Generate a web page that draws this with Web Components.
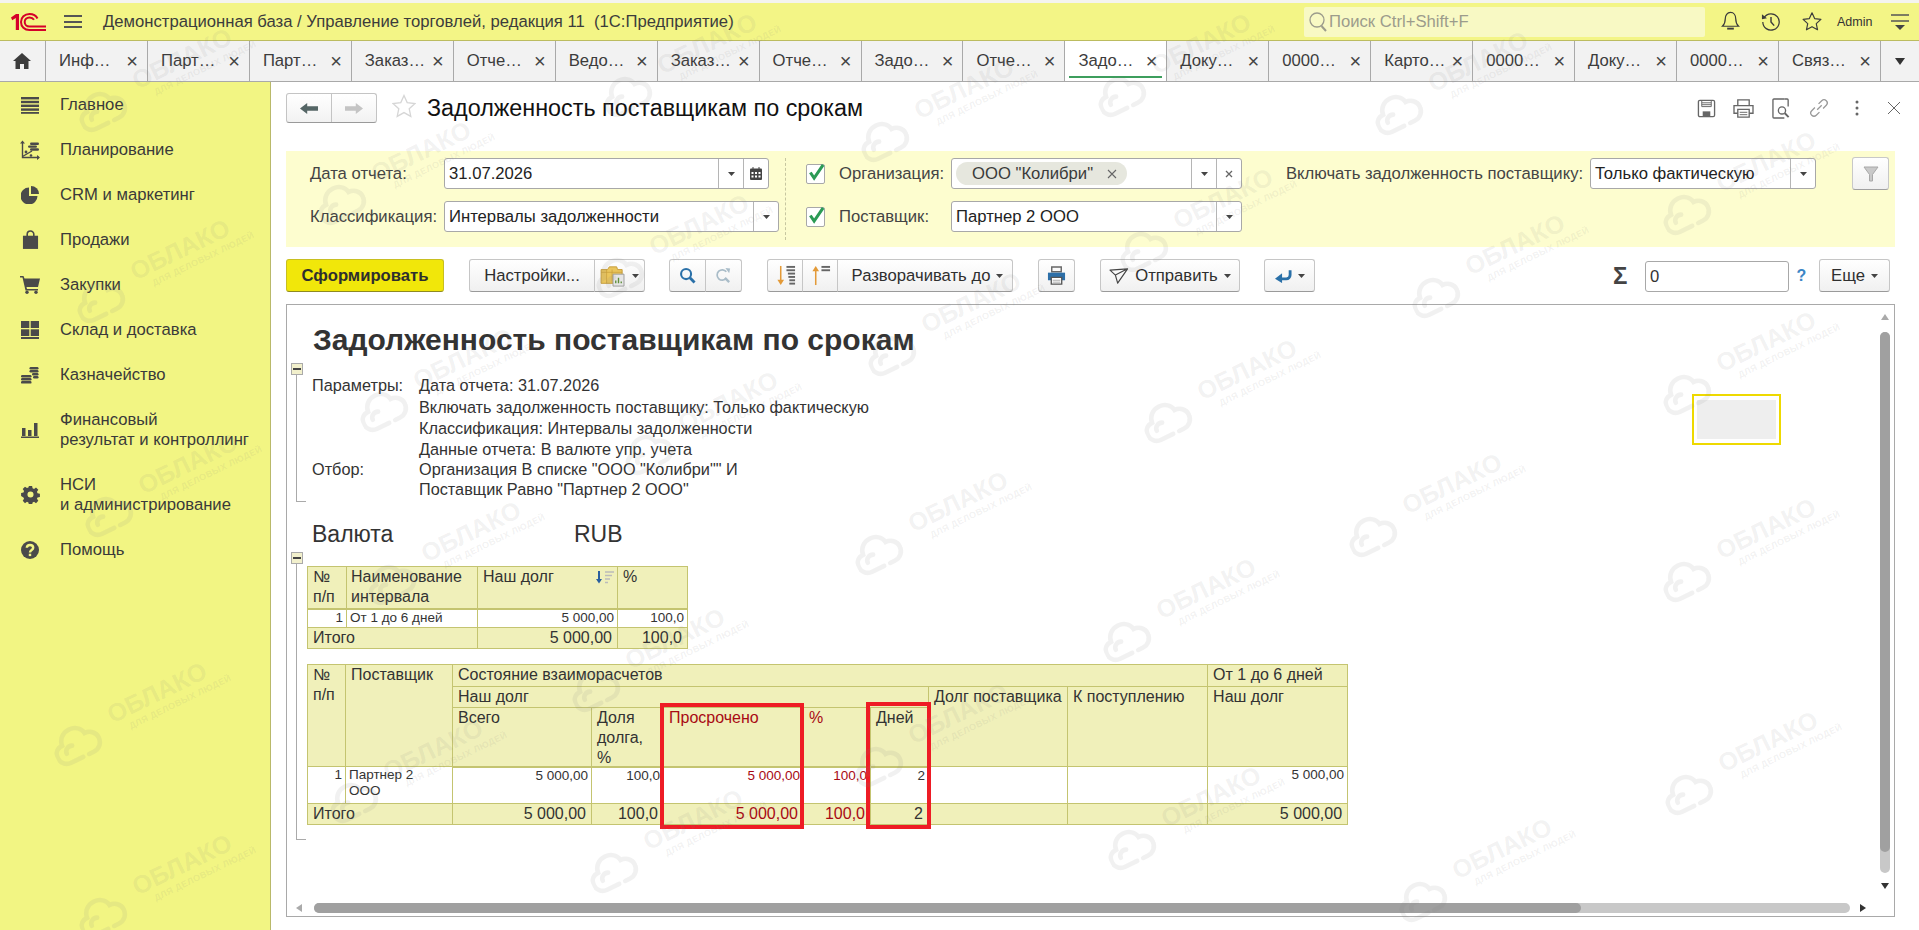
<!doctype html>
<html lang="ru">
<head>
<meta charset="utf-8">
<title>Задолженность поставщикам по срокам</title>
<style>
  html, body { margin: 0; height: 100%; overflow: hidden; background: #fff; }
  body { font-family: "Liberation Sans", Arial, sans-serif; }
</style>
</head>
<body>
<ob-app>
  <ob-header slot="header">Демонстрационная база / Управление торговлей, редакция 11&nbsp; (1С:Предприятие)</ob-header>
  <ob-tabs slot="tabs" labels="Инф…,Парт…,Парт…,Заказ…,Отче…,Ведо…,Заказ…,Отче…,Задо…,Отче…,Задо…,Доку…,0000…,Карто…,0000…,Доку…,0000…,Связ…" active="10"></ob-tabs>
  <ob-sidebar slot="side">
    <ob-nav icon="main">Главное</ob-nav>
    <ob-nav icon="plan">Планирование</ob-nav>
    <ob-nav icon="crm">CRM и маркетинг</ob-nav>
    <ob-nav icon="bag">Продажи</ob-nav>
    <ob-nav icon="cart">Закупки</ob-nav>
    <ob-nav icon="stock">Склад и доставка</ob-nav>
    <ob-nav icon="coins">Казначейство</ob-nav>
    <ob-nav icon="bars" two>Финансовый<br>результат и контроллинг</ob-nav>
    <ob-nav icon="gear" two>НСИ<br>и администрирование</ob-nav>
    <ob-nav icon="help">Помощь</ob-nav>
  </ob-sidebar>
  <ob-form-head slot="main">Задолженность поставщикам по срокам</ob-form-head>
  <ob-filters slot="main"></ob-filters>
  <ob-commandbar slot="main"></ob-commandbar>
  <ob-report slot="main"></ob-report>
  <ob-watermarks slot="over"></ob-watermarks>
</ob-app>

<script>
const I = (vb, body, w, h) => `<svg xmlns="http://www.w3.org/2000/svg" viewBox="${vb}" width="${w}" height="${h || w}">${body}</svg>`;

const navIcons = {
  main: I('0 0 18 18', '<g fill="#4a4a4a"><rect y="1" width="18" height="2.4"/><rect y="4.8" width="18" height="2.4"/><rect y="8.6" width="18" height="2.4"/><rect y="12.4" width="18" height="2.4"/><rect y="16" width="18" height="1.8"/></g>', 18),
  plan: I('0 0 20 20', '<g fill="none" stroke="#4a4a4a" stroke-width="1.4"><path d="M2.5 2v15.5H19"/><path d="M2.5 16.5 12 11"/></g><g fill="#4a4a4a"><path d="M0 3.5 2.5.5 5 3.5zM17 15l3 2.5-3 2.5z"/><rect x="10" y="2.5" width="9" height="2.4" rx="1.2"/><rect x="8" y="5.4" width="9" height="2.4" rx="1.2"/><rect x="10" y="8.3" width="9" height="2.4" rx="1.2"/><circle cx="6" cy="12" r="1.4"/><circle cx="11" cy="15.5" r="1.3"/></g>', 20),
  crm: I('0 0 18 18', '<path fill="#4a4a4a" d="M8 1.5V10h8.500A8.500 8.500 0 1 1 8 1.5z"/><path fill="#4a4a4a" d="M10 0a8 8 0 0 1 8 8h-8z"/>', 18),
  bag: I('0 0 18 20', '<path fill="#4a4a4a" d="M1 6h16v14H1z"/><path fill="none" stroke="#4a4a4a" stroke-width="1.7" d="M5.5 9V4.5a3.5 3.5 0 0 1 7 0V9"/>', 17, 19),
  cart: I('0 0 20 18', '<path fill="#4a4a4a" d="M0 0h3.5l1 2.5H20l-2 8.5H6.5l.5 2h11v1.500H5.500L2.500 1.500H0z"/><circle cx="7" cy="16.3" r="1.7" fill="#4a4a4a"/><circle cx="16" cy="16.3" r="1.7" fill="#4a4a4a"/>', 20, 18),
  stock: I('0 0 18 18', '<g fill="#4a4a4a"><rect x="0" y="0" width="8.3" height="7"/><rect x="9.7" y="0" width="8.3" height="7"/><rect x="0" y="8.3" width="8.3" height="6.7"/><rect x="9.7" y="8.3" width="8.3" height="6.7"/><rect x="0" y="16" width="18" height="2"/></g>', 18),
  coins: I('0 0 18 18', '<g fill="#4a4a4a"><rect x="0" y="9" width="10.5" height="2.4" rx="1.2"/><rect x="0" y="12" width="10.5" height="2.4" rx="1.2"/><rect x="0" y="15" width="10.5" height="2.6" rx="1.2"/><rect x="8.5" y="1" width="9" height="2.4" rx="1.2"/><rect x="8.5" y="4" width="9" height="2.4" rx="1.2"/><rect x="11" y="7" width="6.5" height="2.4" rx="1.2"/><rect x="12" y="10" width="5.5" height="2.4" rx="1.2"/></g>', 18),
  bars: I('0 0 18 16', '<g fill="#4a4a4a"><rect x="1" y="6" width="3.5" height="8"/><rect x="7" y="8" width="3.5" height="6"/><rect x="13" y="1" width="3.5" height="13"/><rect y="14.5" width="18" height="1.5"/></g>', 18, 16),
  gear: I('-1 -1 20 20', '<path fill="#4a4a4a" fill-rule="evenodd" d="M7.3 0h3.400l.5 2.500 1.500.6 2.100-1.400 2.400 2.400-1.400 2.100.6 1.500 2.500.5v3.400l-2.500.5-.6 1.500 1.400 2.100-2.400 2.400-2.100-1.400-1.500.6-.5 2.500H7.3l-.5-2.500-1.500-.6-2.100 1.400-2.400-2.400 1.400-2.100-.6-1.500L-.9 10.700V7.300l2.500-.5.6-1.500L.8 3.200l2.400-2.400 2.100 1.400 1.500-.6zM9 5.800a3.200 3.200 0 1 0 0 6.400 3.200 3.200 0 0 0 0-6.400z"/>', 19),
  help: I('0 0 18 18', '<circle cx="9" cy="9" r="9" fill="#4a4a4a"/><path fill="none" stroke="#f2f583" stroke-width="2.4" d="M5.8 6.8C5.900 5 7.200 4 9 4s3.200 1 3.200 2.700C12.200 9 9 9 9 11.500"/><rect x="7.8" y="12.7" width="2.4" height="2.4" fill="#f2f583"/>', 18)
};

const tool = {
  blueSearch: I('0 0 18 18', '<circle cx="7.5" cy="7.5" r="5.3" fill="none" stroke="#2a70a8" stroke-width="2.2"/><path d="M11.5 11.5 16.5 16.5" stroke="#2a70a8" stroke-width="3"/>', 17),
  graySearch: I('0 0 18 18', '<path d="M13 4a5.5 5.5 0 1 0 0 7" transform="translate(-1 1)" fill="none" stroke="#a9bcc8" stroke-width="1.8"/><path d="M10.5 11.5 15 16" stroke="#a9bcc8" stroke-width="2.5"/><path d="M11 1l5 .5-1 5z" fill="#a9bcc8"/>', 17),
  sortDown: I('0 0 22 22', '<path d="M6 1v17" stroke="#e39a38" stroke-width="1.6"/><path d="M2.5 15.5 6 21l3.5-5.5z" fill="#e39a38"/><g fill="#666"><rect x="12" y="1" width="9" height="2"/><rect x="12" y="4.5" width="9" height="2"/><rect x="13.5" y="8" width="7.5" height="2"/><rect x="14" y="11.5" width="7" height="2"/><rect x="15" y="15" width="6" height="2"/><rect x="15" y="18.5" width="6" height="2"/></g>', 21),
  sortUp: I('0 0 22 22', '<path d="M6 4v17" stroke="#e39a38" stroke-width="1.6"/><path d="M2.5 6.5 6 1l3.5 5.5z" fill="#e39a38"/><g fill="#666"><rect x="12" y="1" width="9" height="2"/><rect x="12" y="4.5" width="9" height="2"/></g>', 21),
  printBlue: I('0 0 20 20', '<path d="M5 1h10v5H5z" fill="none" stroke="#666" stroke-width="1.5"/><path d="M1 7h18v8H1z" fill="#2c6fa8"/><path d="M4.5 12h11v7h-11z" fill="#fff" stroke="#555" stroke-width="1.4"/><path d="M6 15h8M6 17h8" stroke="#aaa"/>', 19),
  send: I('0 0 22 20', '<path d="M1 3.5 20.5 2 9.5 18 7 9z M7 9 20.5 2" fill="none" stroke="#444" stroke-width="1.3" stroke-linejoin="round"/>', 20, 18),
  back: I('0 0 18 14', '<path d="M16 1v5a4 4 0 0 1-4 4H5" fill="none" stroke="#2a70a8" stroke-width="3"/><path d="M7.5 4 0 10l7.500 4.500z" fill="#2a70a8"/>', 17, 14),
  folder: I('0 0 28 24', '<path d="M1 5h7l2-3h8l1 3h5v15H1z" fill="#eac55c" stroke="#c49a38"/><path d="M1 8h23M7 5v15M13 5v15" stroke="#c49a38" stroke-width=".7"/><path d="M14 10h12v13H14z" fill="#e6e6e6" stroke="#999"/><path d="M17 20v-3M20 20v-6M23 20v-2" stroke="#5f8f3c" stroke-width="1.5"/>', 26, 22)
};

const caret = '<svg width="7" height="4" viewBox="0 0 7 4"><path d="M0 0h7L3.5 4z" fill="#444"/></svg>';

class Base extends HTMLElement {
  constructor() {
    super();
    this.attachShadow({ mode: 'open' });
  }
  paint(css, html) {
    this.shadowRoot.innerHTML = `<style>${css}</style>${html}`;
  }
}

class ObApp extends Base {
  connectedCallback() {
    this.paint(`
      :host { display: grid; grid-template-rows: 3px 38px 41px 1fr; grid-template-columns: 271px 1fr; height: 930px; position: relative; overflow: hidden; color: #333; font-size: 16.67px; }
      .top { grid-column: 1 / 3; background: #f4f4ee; }
      .hd { grid-column: 1 / 3; }
      .tb { grid-column: 1 / 3; }
      .mn { display: flex; flex-direction: column; padding: 0 24px 0 15px; min-width: 0; }
    `, `
      <div class="top"></div>
      <div class="hd"><slot name="header"></slot></div>
      <div class="tb"><slot name="tabs"></slot></div>
      <div><slot name="side"></slot></div>
      <div class="mn"><slot name="main"></slot></div>
      <slot name="over"></slot>
    `);
  }
}

class ObHeader extends Base {
  connectedCallback() {
    this.paint(`
      :host { display: flex; align-items: center; height: 38px; box-sizing: border-box; background: #f3f586; border-bottom: 1px solid #bcbc60; padding: 0 10px 0 11px; }
      .burger { margin-left: 18px; width: 18px; display: grid; gap: 3.5px; }
      .burger i { height: 2px; background: #555; display: block; }
      .ttl { margin-left: 21px; font-size: 16.67px; color: #3c3c3c; white-space: nowrap; flex: 1; }
      .search { width: 401px; height: 30px; box-sizing: border-box; background: #f8f9c4; border-radius: 2px; display: flex; align-items: center; padding-left: 5px; color: #9c9c8c; font-size: 16.67px; gap: 2px; }
      .ic { display: flex; align-items: center; justify-content: center; }
      .user { font-size: 12.5px; color: #333; margin-left: 15px; width: 44px; }
    `, `
      ${I('0 0 35 18', '<path d="M0 4.5 5 1h3v16H4.800V5L1.200 7.300z" fill="#d5002a"/><g fill="none" stroke="#d5002a" stroke-width="2"><path d="M26.5 5.5C25 2.5 22 1 18.5 1 13.5 1 10 4.500 10 9s3.500 8 8.500 8H35"/><path d="M23 6.8C22 5.300 20.300 4.500 18.500 4.500 15.700 4.500 13.700 6.500 13.700 9s2 4.500 4.800 4.500H35"/></g>', 35, 18)}
      <div class="burger"><i></i><i></i><i></i></div>
      <div class="ttl"><slot></slot></div>
      <div class="search">
        ${I('0 0 18 20', '<circle cx="8" cy="8" r="7" fill="none" stroke="#9c9c8c" stroke-width="1.3"/><path d="M12.5 14 17 19" stroke="#9c9c8c" stroke-width="2"/>', 18, 20)}
        <span>Поиск Ctrl+Shift+F</span>
      </div>
      <div class="ic" style="margin-left:15px;width:20px">${I('0 0 20 22', '<path d="M10 1.5c-3.500 0-5.500 3-5.500 6.500 0 3.500-1 6-3 8h17c-2-2-3-4.500-3-8 0-3.500-2-6.500-5.500-6.500z" fill="none" stroke="#3c3c3c" stroke-width="1.3"/><path d="M6.5 18.5h7" stroke="#3c3c3c" stroke-width="2"/>', 19, 21)}</div>
      <div class="ic" style="margin-left:21px;width:20px">${I('0 0 22 22', '<path d="M3.5 6A9 9 0 1 1 2 11" fill="none" stroke="#3c3c3c" stroke-width="1.4"/><path d="M1 2.5 6.500 7 1 8z" fill="#3c3c3c"/><path d="M11 5.5V11l3.500 4" fill="none" stroke="#3c3c3c" stroke-width="1.6"/>', 20)}</div>
      <div class="ic" style="margin-left:21px;width:20px">${I('0 0 22 22', '<path d="m11 1.5 2.900 6.300 6.900.8-5.100 4.700 1.400 6.800L11 16.700l-6.100 3.400 1.400-6.800L1.200 8.600l6.900-.8z" fill="none" stroke="#3c3c3c" stroke-width="1.3" stroke-linejoin="round"/>', 21)}</div>
      <div class="user">Admin</div>
      <div class="ic" style="width:18px;margin-left:10px">${I('0 0 18 18', '<path d="M0 2h18M0 8h18" stroke="#555" stroke-width="1.5"/><path d="M4 12h10l-5 5z" fill="#444"/>', 18)}</div>
    `);
  }
}

class ObTabs extends Base {
  connectedCallback() {
    const labels = this.getAttribute('labels').split(',');
    const active = +this.getAttribute('active');
    const tabs = labels.map((t, i) => `<div class="tab ${i === active ? 'on' : ''}"><span>${t}</span><b>×</b></div>`).join('');
    this.paint(`
      :host { display: flex; height: 41px; box-sizing: border-box; background: #f2f2f2; border-bottom: 1px solid #a9a9a9; }
      .home { flex: none; display: flex; align-items: center; justify-content: center; border-right: 1px solid #a9a9a9; padding-right: 1px; box-sizing: border-box; width: 46px; }
      .tab { width: 101.94px; flex: none; box-sizing: border-box; border-right: 1px solid #a9a9a9; padding: 0 9px 0 13px; display: flex; align-items: center; justify-content: space-between; color: #3c3c3c; font-size: 16.67px; position: relative; }
      .tab b { font-weight: 400; font-size: 20px; color: #444; line-height: 1; }
      .on { background: #fff; }
      .on::after { content: ""; position: absolute; left: 4px; right: 4px; bottom: 3px; height: 2px; background: #3d9e5d; }
      .more { flex: 1; display: flex; align-items: center; justify-content: center; }
    `, `
      <div class="home">${I('0 0 18 16', '<path d="M9 0 0 8h2.500v8H7v-5h4v5h4.500V8H18z" fill="#3c3c3c"/>', 18, 16)}</div>
      ${tabs}
      <div class="more"><svg width="10" height="7" viewBox="0 0 10 7"><path d="M0 0h10L5 7z" fill="#333"/></svg></div>
    `);
  }
}

class ObSidebar extends Base {
  connectedCallback() {
    this.paint(`
      :host { display: block; height: 100%; background: #f2f583; border-right: 1px solid #b9b96a; box-sizing: border-box; }
    `, `<slot></slot>`);
  }
}

class ObNav extends Base {
  connectedCallback() {
    this.paint(`
      :host { display: flex; align-items: center; height: 45px; color: #3a3a3a; font-size: 16.67px; line-height: 20px; }
      :host([two]) { height: 65px; }
      .i { width: 60px; flex: none; display: flex; justify-content: center; box-sizing: border-box; }
    `, `<div class="i">${navIcons[this.getAttribute('icon')]}</div><div><slot></slot></div>`);
  }
}

class ObFormHead extends Base {
  connectedCallback() {
    this.paint(`
      :host { display: flex; align-items: center; height: 30px; margin: 11px -18px 0 0; flex: none; }
      .nav { display: flex; width: 91px; height: 30px; box-sizing: border-box; border: 1px solid #c4c4c4; border-bottom-color: #9a9a9a; border-radius: 3px; background: linear-gradient(#fff, #f2f2f2); }
      .nav div { flex: 1; display: flex; align-items: center; justify-content: center; }
      .nav div + div { border-left: 1px solid #c4c4c4; }
      .star { margin-left: 15px; }
      .t { margin-left: 11px; font-size: 23.33px; color: #111; flex: 1; white-space: nowrap; }
      .ic { display: flex; justify-content: center; width: 37.6px; }
    `, `
      <div class="nav">
        <div>${I('0 0 20 14', '<path d="M0 7 8 1v3.500h12v5H8V13z" fill="#566"/>', 18, 13)}</div>
        <div>${I('0 0 20 14', '<path d="M20 7 12 1v3.500H0v5h12V13z" fill="#c4c4c4"/>', 18, 13)}</div>
      </div>
      <div class="star">${I('0 0 24 24', '<path d="m12 1.500 3.200 7.100 7.800.9-5.800 5.200 1.600 7.700L12 18.600l-6.800 3.800 1.600-7.700L1 9.500l7.800-.9z" fill="#fff" stroke="#d6d6d6" stroke-width="1.3"/>', 24)}</div>
      <div class="t"><slot></slot></div>
      <div class="ic">${I('0 0 20 20', '<path d="M1.500 3A1.500 1.500 0 0 1 3 1.500h14A1.500 1.500 0 0 1 18.500 3v14a1.500 1.500 0 0 1-1.500 1.500H3A1.500 1.500 0 0 1 1.500 17z" fill="none" stroke="#666" stroke-width="1.4"/><path d="M5 2v6h10V2M5 4h10M5 6h10" fill="none" stroke="#666"/><path d="M6 13h8v5H6z" fill="#666"/>', 19)}</div>
      <div class="ic">${I('0 0 22 20', '<path d="M5 7V1h12v6M5 15H1V7h20v8h-4" fill="none" stroke="#666" stroke-width="1.4"/><path d="M5 11h12v8H5z" fill="none" stroke="#666" stroke-width="1.4"/><path d="M7 14h8M7 16.500h8" stroke="#666"/>', 21, 19)}</div>
      <div class="ic">${I('0 0 20 22', '<path d="M13 1H2a1 1 0 0 0-1 1v18a1 1 0 0 0 1 1h11" fill="none" stroke="#666" stroke-width="1.4"/><path d="M13 1h3a1 1 0 0 1 1 1v7" fill="none" stroke="#666" stroke-width="1.4"/><circle cx="10.5" cy="13" r="3.8" fill="none" stroke="#666" stroke-width="1.4"/><path d="m13.500 16 4 4" stroke="#666" stroke-width="2"/>', 19, 21)}</div>
      <div class="ic">${I('0 0 22 22', '<path d="m9 13 5-5M6.500 10.500 3 14a3.500 3.500 0 0 0 5 5l3.500-3.500M10.500 6.500 14 3a3.500 3.500 0 0 1 5 5l-3.500 3.500" fill="none" stroke="#999" stroke-width="1.4"/>', 20)}</div>
      <div class="ic">${I('0 0 4 16', '<circle cx="2" cy="2" r="1.5" fill="#666"/><circle cx="2" cy="8" r="1.5" fill="#666"/><circle cx="2" cy="14" r="1.5" fill="#666"/>', 4, 16)}</div>
      <div class="ic">${I('0 0 14 14', '<path d="m1 1 12 12M13 1 1 13" stroke="#666" stroke-width="1"/>', 14)}</div>
    `);
  }
}

class ObField extends Base {
  connectedCallback() {
    const w = this.getAttribute('w');
    const btns = (this.getAttribute('btns') || '').split(',').filter(Boolean);
    const btn = {
      drop: `<div class="b" style="width:25px">${caret}</div>`,
      cal: `<div class="b" style="width:25px">${I('0 0 12 13', '<rect y="1.5" width="12" height="11.5" rx="1" fill="#444"/><path d="M3 0v2M9 0v2" stroke="#444"/><path d="M1.5 5h2v2h-2zM5 5h2v2H5zM8.500 5h2v2h-2zM1.500 8.500h2v2h-2zM5 8.500h2v2H5zM8.500 8.500h2v2h-2z" fill="#fff"/>', 12, 13)}</div>`,
      clear: `<div class="b" style="width:25px">${I('0 0 8 8', '<path d="m1 1 6 6M7 1 1 7" stroke="#666" stroke-width="1.3"/>', 8)}</div>`
    };
    this.paint(`
      :host { display: flex; width: ${w}px; height: 31px; box-sizing: border-box; background: #fff; border: 1px solid #a8a8a8; border-radius: 3px; font-size: 16.67px; color: #222; flex: none; }
      .v { flex: 1; display: flex; align-items: center; padding-left: 4px; white-space: nowrap; overflow: hidden; min-width: 0; }
      .b { display: flex; align-items: center; justify-content: center; border-left: 1px solid #b5b5b5; flex: none; box-sizing: border-box; }
    `, `<div class="v"><slot></slot></div>${btns.map(b => btn[b]).join('')}`);
  }
}

class ObCheck extends Base {
  connectedCallback() {
    this.paint(`
      :host { display: block; width: 19px; height: 20px; box-sizing: border-box; border: 1px solid #a8a8a8; border-radius: 2px; background: #fff; position: relative; flex: none; }
      svg { position: absolute; left: 1px; top: -2px; }
    `, I('0 0 18 18', '<path d="M2.500 9.500 6.500 15.500 16 1.500" fill="none" stroke="#2b9a55" stroke-width="3.2"/>', 17, 18));
  }
}

class ObFilters extends Base {
  connectedCallback() {
    this.paint(`
      :host { display: flex; align-items: flex-start; height: 96px; margin-top: 28px; flex: none; box-sizing: border-box; background: #fdfdcf; padding: 7px 0 0 24px; font-size: 16.67px; color: #444; }
      .col { display: grid; grid-template-rows: 31px 31px; row-gap: 12px; align-items: center; }
      .c1 { grid-template-columns: 134px auto; }
      .div { margin: 0 20px 0 6px; width: 0; height: 82px; border-left: 1px dashed #c7c7a0; }
      .c2 { grid-template-columns: 33px 112px auto; }
      .inc { margin-left: 44px; width: 304px; height: 31px; display: flex; align-items: center; white-space: nowrap; }
      .fbtn { margin: -1px 0 0 36px; width: 37px; height: 33px; box-sizing: border-box; border: 1px solid #c8c8c8; border-bottom-color: #a0a0a0; border-radius: 3px; background: linear-gradient(#fff, #f0f0f0); display: flex; align-items: center; justify-content: center; }
      .chip { display: inline-flex; align-items: center; height: 23px; width: 171px; box-sizing: border-box; padding: 0 10px 0 16px; justify-content: space-between; background: #e6e7de; border-radius: 12px; color: #3a3a3a; }
    `, `
      <div class="col c1">
        <span>Дата отчета:</span><ob-field w="325" btns="drop,cal">31.07.2026</ob-field>
        <span>Классификация:</span><ob-field w="335" btns="drop">Интервалы задолженности</ob-field>
      </div>
      <div class="div"></div>
      <div class="col c2">
        <ob-check></ob-check><span>Организация:</span>
        <ob-field w="291" btns="drop,clear"><span class="chip">ООО "Колибри" ${I('0 0 10 10', '<path d="m1 1 8 8M9 1 1 9" stroke="#666" stroke-width="1.1"/>', 10)}</span></ob-field>
        <ob-check></ob-check><span>Поставщик:</span>
        <ob-field w="291" btns="drop">Партнер 2 ООО</ob-field>
      </div>
      <div class="inc">Включать задолженность поставщику:</div>
      <ob-field w="226" btns="drop">Только фактическую</ob-field>
      <div class="fbtn">${I('0 0 16 16', '<path d="M1 1h14L9.500 8.500V15h-3V8.500z" fill="#c9c9c9" stroke="#a8a8a8"/>', 16)}</div>
    `);
  }
}

class ObBtn extends Base {
  connectedCallback() {
    const w = this.getAttribute('w');
    this.paint(`
      :host { display: inline-flex; align-items: center; justify-content: center; gap: 6px; width: ${w}px; height: 33px; flex: none; box-sizing: border-box; border: 1px solid #c6c6c6; border-bottom-color: #9a9a9a; background: linear-gradient(#fff, #f0f0f0); border-radius: 3px; font-size: 16.67px; color: #2f2f2f; white-space: nowrap; }
      :host([l]) { border-radius: 3px 0 0 3px; }
      :host([m]) { border-radius: 0; margin-left: -1px; }
      :host([r]) { border-radius: 0 3px 3px 0; margin-left: -1px; }
      :host([primary]) { background: #f1e70a; border-color: #c8bf20; border-bottom-color: #8f8a20; font-weight: 700; color: #2e2e2e; }
    `, `<slot></slot>`);
  }
}

class ObCommandbar extends Base {
  connectedCallback() {
    this.paint(`
      :host { display: flex; align-items: flex-start; margin-top: 12px; height: 33px; flex: none; padding-right: 5px; }
      .g { margin-left: 25px; display: flex; }
      .sp { flex: 1; }
      .sigma { font-size: 24px; font-weight: 700; color: #444; width: 32px; line-height: 33px; }
      .sum { width: 144px; height: 31px; box-sizing: border-box; border: 1px solid #a8a8a8; border-radius: 3px; margin: 2px 0 0 0; background: #fff; display: flex; align-items: center; padding-left: 4px; font-size: 16.67px; color: #333; }
      .q { width: 30px; padding-right: 5px; box-sizing: border-box; text-align: center; color: #3c86c6; font-weight: 700; font-size: 16px; line-height: 33px; }
    `, `
      <ob-btn primary w="158">Сформировать</ob-btn>
      <div class="g"><ob-btn l w="126">Настройки...</ob-btn><ob-btn r w="51">${tool.folder}${caret}</ob-btn></div>
      <div class="g" style="margin-left:24px"><ob-btn l w="37">${tool.blueSearch}</ob-btn><ob-btn r w="37">${tool.graySearch}</ob-btn></div>
      <div class="g"><ob-btn l w="36">${tool.sortDown}</ob-btn><ob-btn m w="36">${tool.sortUp}</ob-btn><ob-btn r w="176" style="padding-left:5px">Разворачивать до ${caret}</ob-btn></div>
      <div class="g"><ob-btn w="37">${tool.printBlue}</ob-btn></div>
      <div class="g"><ob-btn w="140">${tool.send}Отправить ${caret}</ob-btn></div>
      <div class="g" style="margin-left:24px"><ob-btn w="51">${tool.back}${caret}</ob-btn></div>
      <div class="sp"></div>
      <div class="sigma">Σ</div>
      <div class="sum">0</div>
      <div class="q">?</div>
      <ob-btn w="71">Еще ${caret}</ob-btn>
    `);
  }
}

class ObReport extends Base {
  connectedCallback() {
    this.paint(`
      :host { display: grid; grid-template-columns: 20px 1fr; height: 613px; margin-top: 12px; flex: none; box-sizing: border-box; border: 1px solid #a9a9a9; position: relative; overflow: hidden; font-size: 16.25px; color: #333; }
      .gutter { display: flex; flex-direction: column; }
      .mk { width: 12px; height: 12px; box-sizing: border-box; margin-left: 4px; border: 1px solid #aaa; background: #f2f0cc; display: flex; align-items: center; justify-content: center; }
      .mk::before { content: ""; width: 8px; height: 2px; background: #444; }
      .ln { width: 10px; margin-left: 9px; border-left: 1px solid #aaa; border-bottom: 1px solid #aaa; box-sizing: border-box; }
      .h1 { font-size: 30px; font-weight: 700; color: #333; line-height: 40px; margin: 15px 0 0 6px; white-space: nowrap; }
      .par { display: grid; grid-template-columns: 107px 1fr; grid-template-rows: 22px 22px 20px 21px 20px 20px; margin: 14px 0 0 5px; line-height: 20px; align-items: center; }
      .par .x { grid-column: 2; }
      .cur { display: grid; grid-template-columns: 262px 1fr; margin: 23px 0 0 5px; font-size: 23px; line-height: 24px; }
      table { border-collapse: collapse; table-layout: fixed; font-size: 16px; line-height: 20px; color: #333; }
      td { border: 1px solid #c4c470; padding: 0 5px; vertical-align: top; overflow: hidden; }
      .hd td { background: #f0f0ba; }
      .tot td { background: #f0f0ba; vertical-align: middle; }
      .val td { background: #fff; font-size: 13.5px; padding: 0 3px; line-height: 16px; }
      .a { text-align: right; }
      .thick td { border-bottom-width: 2px; }
      .red { color: #a80a14 !important; }
      .t1 { margin: 20px 0 0 0; width: 380px; }
      .t2 { margin: 15px 0 0 0; width: 1040px; }
      .tight { margin-bottom: -3px; }
      .box { position: absolute; box-sizing: border-box; border: 4px solid #ee1c25; }
      .sq { position: absolute; left: 1405px; top: 89px; width: 89px; height: 51px; box-sizing: border-box; border: 2px solid #eed900; padding: 4px 3px; background: #fff; }
      .sq i { display: block; height: 100%; background: #eee; }
      .vb, .hb { position: absolute; background: #c8c8c8; border-radius: 6px; }
      .vb { right: 4px; top: 27px; width: 10px; bottom: 43px; }
      .hb { left: 27px; bottom: 3px; width: 1536px; height: 10px; }
      .vb i, .hb i { position: absolute; display: block; background: #a0a0a0; border-radius: 6px; left: 0; top: 0; }
      .vb i { width: 100%; height: 520px; }
      .hb i { height: 100%; width: 1267px; }
      .ar { position: absolute; width: 0; height: 0; border: 4px solid transparent; }
      .up { right: 5px; top: 9px; border-bottom: 6px solid #aaa; border-top: 0; }
      .dn { right: 5px; bottom: 27px; border-top: 6px solid #333; border-bottom: 0; }
      .lf { left: 9px; bottom: 4px; border-right: 6px solid #aaa; border-left: 0; }
      .rt { right: 28px; bottom: 4px; border-left: 6px solid #333; border-right: 0; }
    `, `
      <div class="gutter">
        <div class="mk" style="margin-top:58px"></div>
        <div class="ln" style="height:127px"></div>
        <div class="mk" style="margin-top:50px"></div>
        <div class="ln" style="height:276px"></div>
      </div>
      <div class="body">
        <div class="h1">Задолженность поставщикам по срокам</div>
        <div class="par">
          <span>Параметры:</span><span>Дата отчета: 31.07.2026</span>
          <span class="x">Включать задолженность поставщику: Только фактическую</span>
          <span class="x">Классификация: Интервалы задолженности</span>
          <span class="x">Данные отчета: В валюте упр. учета</span>
          <span>Отбор:</span><span>Организация В списке "ООО "Колибри"" И</span>
          <span class="x">Поставщик Равно "Партнер 2 ООО"</span>
        </div>
        <div class="cur"><span>Валюта</span><span>RUB</span></div>
        <table class="t1">
          <colgroup><col style="width:39px"><col style="width:131px"><col style="width:140px"><col style="width:70px"></colgroup>
          <tr class="hd thick" style="height:42px"><td>№<br>п/п</td><td style="padding-left:4px">Наименование интервала</td>
            <td style="position:relative">Наш долг<span style="position:absolute;right:2px;top:2px">${I('0 0 20 14', '<path d="M4 1v9" stroke="#2a5f9e" stroke-width="2"/><path d="M1 9h6l-3 4.500z" fill="#2a5f9e"/><path d="M10 2h9M10 5.500h7M10 9h5M10 12.500h3" stroke="#bbb" stroke-width="1.4"/>', 20, 14)}</span></td><td>%</td></tr>
          <tr class="val" style="height:19px"><td class="a">1</td><td>От 1 до 6 дней</td><td class="a">5 000,00</td><td class="a">100,0</td></tr>
          <tr class="tot" style="height:20px"><td colspan="2">Итого</td><td class="a">5 000,00</td><td class="a">100,0</td></tr>
        </table>
        <table class="t2">
          <colgroup><col style="width:38px"><col style="width:107px"><col style="width:139px"><col style="width:72px"><col style="width:140px"><col style="width:67px"><col style="width:58px"><col style="width:139px"><col style="width:140px"><col style="width:140px"></colgroup>
          <tr class="hd" style="height:22px"><td rowspan="3">№<br>п/п</td><td rowspan="3">Поставщик</td><td colspan="7">Состояние взаиморасчетов</td><td>От 1 до 6 дней</td></tr>
          <tr class="hd" style="height:21px"><td colspan="5">Наш долг</td><td rowspan="2">Долг поставщика</td><td rowspan="2">К поступлению</td><td rowspan="2">Наш долг</td></tr>
          <tr class="hd thick" style="height:59px"><td>Всего</td><td><div class="tight">Доля<br>долга,<br>%</div></td><td class="red">Просрочено</td><td class="red">%</td><td>Дней</td></tr>
          <tr class="val" style="height:37px"><td class="a">1</td><td>Партнер 2<br>ООО</td><td class="a">5 000,00</td><td class="a">100,0</td><td class="a red">5 000,00</td><td class="a red">100,0</td><td class="a">2</td><td></td><td></td><td class="a">5 000,00</td></tr>
          <tr class="tot" style="height:20px"><td colspan="2">Итого</td><td class="a">5 000,00</td><td class="a">100,0</td><td class="a red">5 000,00</td><td class="a red">100,0</td><td class="a">2</td><td></td><td></td><td class="a">5 000,00</td></tr>
        </table>
      </div>
      <div class="box" style="left:373px;top:398px;width:144px;height:126px"></div>
      <div class="box" style="left:579px;top:397px;width:65px;height:127px"></div>
      <div class="sq"><i></i></div>
      <div class="ar up"></div><div class="vb"><i></i></div><div class="ar dn"></div>
      <div class="ar lf"></div><div class="hb"><i></i></div><div class="ar rt"></div>
    `);
  }
}

const marks = [[184,57],[182,248],[190,462],[159,691],[184,863],[423,150],[465,357],[473,530],[435,748],[709,42],[701,223],[730,400],[677,637],[695,818],[966,87],[973,301],[960,500],[960,712],[1225,197],[1249,368],[1208,587],[1213,795],[1203,42],[1480,60],[1517,243],[1454,482],[1504,847],[1768,160],[1768,340],[1768,527],[1770,740]];

class ObWatermarks extends Base {
  connectedCallback() {
    const cloud = I('0 0 60 44', '<g fill="none" stroke="currentColor" stroke-width="5.5" stroke-linecap="round"><path d="M30 40H14C6 40 2 34 2 28c0-7 5-11 11-11C14 8 21 3 29 3c8 0 14 5 15 12 7 0 13 5 13 12s-5 13-13 13h-6"/><path d="M14 28c0-5 5-8 10-6"/></g>', 50, 38);
    const items = marks.map(([x, y]) => `
      <div class="m" style="left:${x - 122}px;top:${y - 14}px">
        <div class="c">${cloud}</div>
        <div class="t"><b>ОБЛАКО</b><small>ДЛЯ ДЕЛОВЫХ ЛЮДЕЙ</small></div>
      </div>`).join('');
    this.paint(`
      :host { position: absolute; inset: 0; overflow: hidden; pointer-events: none; color: rgba(128,128,128,.115); }
      .m { position: absolute; display: flex; gap: 16px; width: 190px; transform: rotate(-26deg); transform-origin: 122px 14px; }
      .c { width: 50px; padding-top: 6px; flex: none; }
      .t { display: flex; flex-direction: column; width: 116px; white-space: nowrap; }
      b { font-size: 25px; line-height: 28px; }
      small { font-size: 9px; font-weight: 700; line-height: 11px; letter-spacing: .4px; margin-left: 14px; }
    `, items);
  }
}

customElements.define('ob-app', ObApp);
customElements.define('ob-header', ObHeader);
customElements.define('ob-tabs', ObTabs);
customElements.define('ob-sidebar', ObSidebar);
customElements.define('ob-nav', ObNav);
customElements.define('ob-form-head', ObFormHead);
customElements.define('ob-field', ObField);
customElements.define('ob-check', ObCheck);
customElements.define('ob-filters', ObFilters);
customElements.define('ob-btn', ObBtn);
customElements.define('ob-commandbar', ObCommandbar);
customElements.define('ob-report', ObReport);
customElements.define('ob-watermarks', ObWatermarks);
</script>
</body>
</html>
